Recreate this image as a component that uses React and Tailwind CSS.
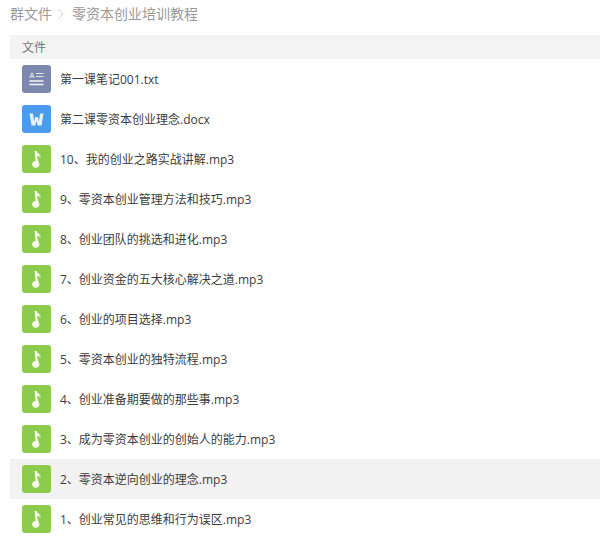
import React from 'react'

const font = { fontFamily: '"Open Sans", "Noto Sans CJK SC", sans-serif' }

const files = [
  { name: '第一课笔记001.txt', type: 'txt' },
  { name: '第二课零资本创业理念.docx', type: 'doc' },
  { name: '10、我的创业之路实战讲解.mp3', type: 'mp3' },
  { name: '9、零资本创业管理方法和技巧.mp3', type: 'mp3' },
  { name: '8、创业团队的挑选和进化.mp3', type: 'mp3' },
  { name: '7、创业资金的五大核心解决之道.mp3', type: 'mp3' },
  { name: '6、创业的项目选择.mp3', type: 'mp3' },
  { name: '5、零资本创业的独特流程.mp3', type: 'mp3' },
  { name: '4、创业准备期要做的那些事.mp3', type: 'mp3' },
  { name: '3、成为零资本创业的创始人的能力.mp3', type: 'mp3' },
  { name: '2、零资本逆向创业的理念.mp3', type: 'mp3', active: true },
  { name: '1、创业常见的思维和行为误区.mp3', type: 'mp3' },
]

function FileIcon({ type }) {
  if (type === 'txt') {
    return (
      <div className="w-[29px] h-[28px] rounded-[3px] bg-[#7c88ad] flex items-center justify-center shrink-0">
        <svg width="15" height="14" viewBox="0 0 15 14" fill="none">
          <path d="M0.8 6 L3 0.8 L5.2 6 M1.6 4.4 H4.4" stroke="#e4e7f0" strokeWidth="1" />
          <path d="M7 1.5 H14.5 M7 4.5 H14.5" stroke="#e4e7f0" strokeWidth="1.2" />
          <path d="M0.5 9 H14.5 M0.5 12.5 H14.5" stroke="#f2f4f8" strokeWidth="1.3" />
        </svg>
      </div>
    )
  }
  if (type === 'doc') {
    return (
      <div className="w-[29px] h-[28px] rounded-[3px] bg-[#4b9bef] flex items-center justify-center shrink-0">
        <svg width="15" height="13" viewBox="0 0 15 13">
          <path d="M0.5 0.5 H4 L5 8.5 L6.2 4 H8.8 L10 8.5 L11 0.5 H14.5 L12.5 12.5 H8.8 L7.5 8 L6.2 12.5 H2.5 Z" fill="#e8f3fe" />
        </svg>
      </div>
    )
  }
  return (
    <div className="w-[29px] h-[28px] rounded-[3px] bg-[#8ccb4b] flex items-center justify-center shrink-0">
      <svg width="9" height="17" viewBox="0 0 9 17">
        <ellipse cx="3.8" cy="13.3" rx="3.6" ry="3.4" fill="#f4faec" />
        <path d="M2.6 0 L4.6 0 C5 2.2 8.7 3 8.7 7 C7.6 5.5 6.4 5 5 4.8 L6.6 12 H3.8 Z" fill="#f4faec" />
      </svg>
    </div>
  )
}

export default function App() {
  return (
    <div className="w-[600px] h-[554px] bg-white overflow-hidden pl-[10px]" style={font}>
      <div className="h-[35px] pb-[8px] flex items-center text-[14px] text-[#9a9a9a]">
        <span>群文件</span>
        <svg className="mx-[5px]" width="7" height="12" viewBox="0 0 7 12" fill="none">
          <path d="M1 1 L6 6 L1 11" stroke="#d4d4d4" strokeWidth="1" />
        </svg>
        <span className="ml-[3px]">零资本创业培训教程</span>
      </div>

      <div className="h-[24px] bg-[#f3f3f3] pl-[12px] pt-[2px] flex items-center text-[12px] text-[#777777]">文件</div>

      <div>
        {files.map((file) => (
          <div
            key={file.name}
            className={`h-[40px] pl-[12px] flex items-center gap-[9px] text-[12px] text-[#3c3c3c] ${file.active ? 'bg-[#f2f2f2]' : ''}`}
          >
            <FileIcon type={file.type} />
            <span className="pt-[2px]">{file.name}</span>
          </div>
        ))}
      </div>
    </div>
  )
}
